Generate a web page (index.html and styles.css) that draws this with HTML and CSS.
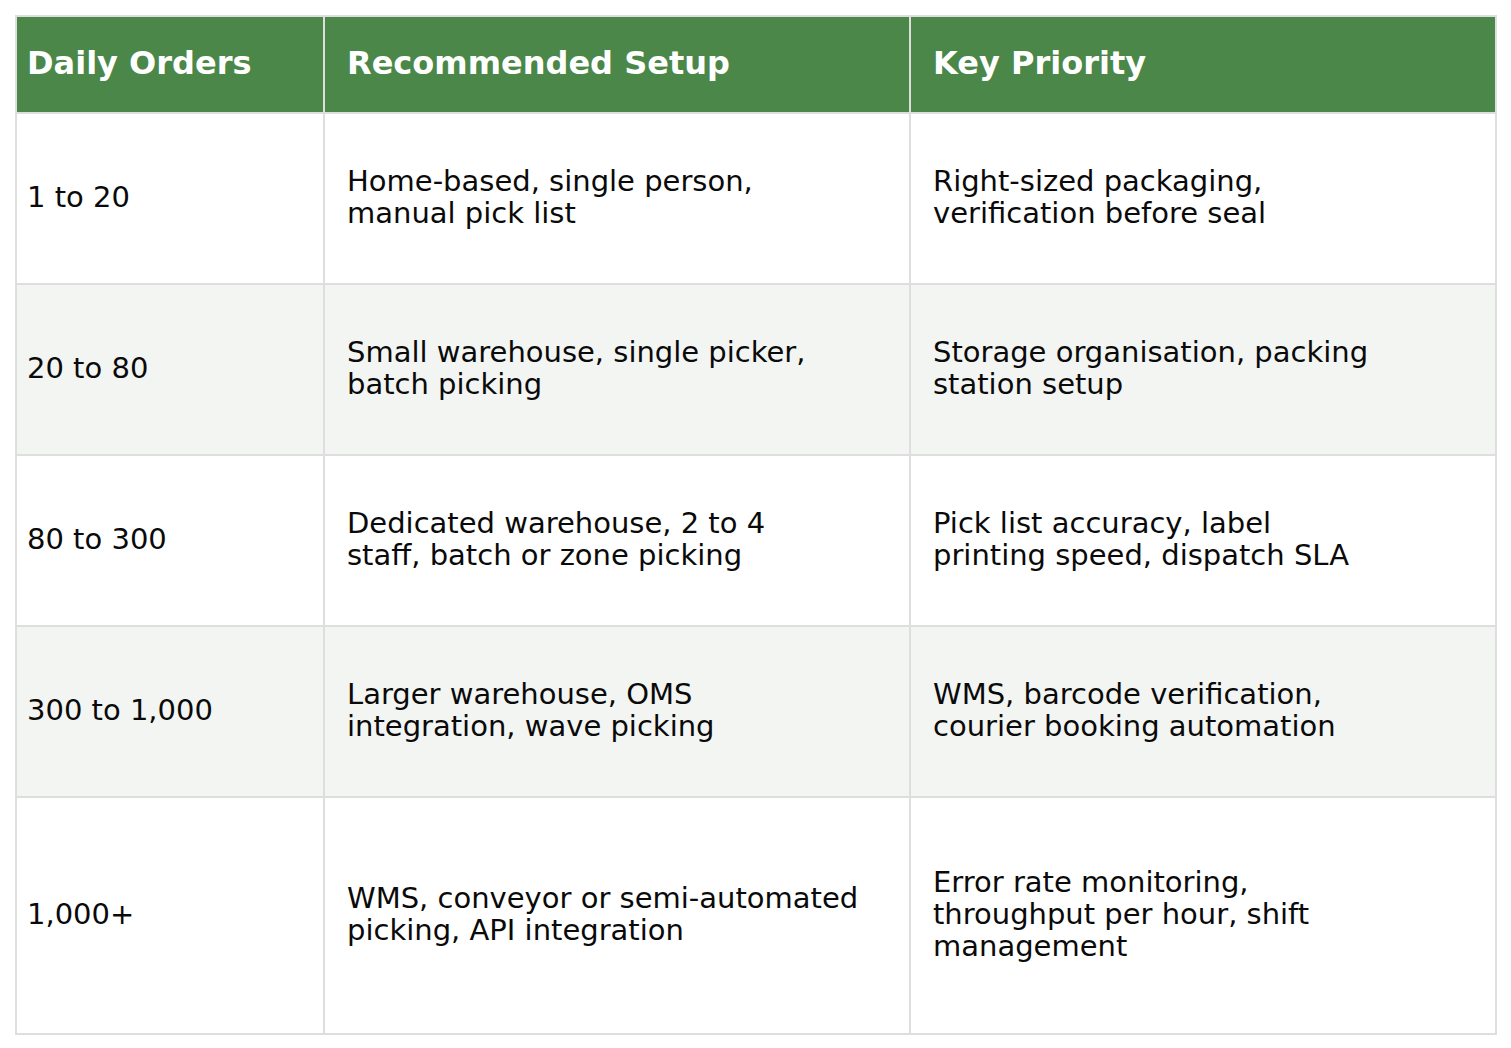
FILE: index.html
```html
<!DOCTYPE html>
<html>
<head>
<meta charset="utf-8">
<link rel="stylesheet" href="styles.css">
</head>
<body>
<div class="wrap">
<table class="grid">
  <colgroup>
    <col class="c1"><col class="c2"><col class="c3">
  </colgroup>
  <thead>
    <tr>
      <th class="first">Daily Orders</th>
      <th>Recommended Setup</th>
      <th>Key Priority</th>
    </tr>
  </thead>
  <tbody>
    <tr>
      <td class="first">1 to 20</td>
      <td>Home-based, single person,<br>manual pick list</td>
      <td>Right-sized packaging,<br>verification before seal</td>
    </tr>
    <tr class="alt">
      <td class="first">20 to 80</td>
      <td>Small warehouse, single picker,<br>batch picking</td>
      <td>Storage organisation, packing<br>station setup</td>
    </tr>
    <tr>
      <td class="first">80 to 300</td>
      <td>Dedicated warehouse, 2 to 4<br>staff, batch or zone picking</td>
      <td>Pick list accuracy, label<br>printing speed, dispatch SLA</td>
    </tr>
    <tr class="alt">
      <td class="first">300 to 1,000</td>
      <td>Larger warehouse, OMS<br>integration, wave picking</td>
      <td>WMS, barcode verification,<br>courier booking automation</td>
    </tr>
    <tr class="tall">
      <td class="first">1,000+</td>
      <td>WMS, conveyor or semi-automated<br>picking, API integration</td>
      <td>Error rate monitoring,<br>throughput per hour, shift<br>management</td>
    </tr>
  </tbody>
</table>
</div>
</body>
</html>
```

FILE: styles.css
```css
html, body {
  margin: 0;
  padding: 0;
  background: #ffffff;
}
.wrap {
  padding: 15px;
}
.grid {
  border-collapse: collapse;
  table-layout: fixed;
  width: 1482px;
  font-family: "DejaVu Sans", sans-serif;
  color: #0a0a0a;
}
.c1 { width: 308px; }
.c2 { width: 586px; }
.c3 { width: 586px; }
.grid th,
.grid td {
  border: 2px solid #dedede;
  padding: 0 20px 3px 22px;
  vertical-align: middle;
  text-align: left;
  font-size: 29px;
  line-height: 32px;
  font-weight: normal;
}
.grid th {
  background: #4a8749;
  color: #ffffff;
  font-weight: bold;
  font-size: 32px;
  height: 91px;
  padding-bottom: 4px;
}
.grid .first {
  padding-left: 10px;
}
.grid td {
  height: 166px;
}
.grid tr.alt td {
  background: #f3f5f3;
}
.grid tr.tall td {
  height: 232px;
}
```
